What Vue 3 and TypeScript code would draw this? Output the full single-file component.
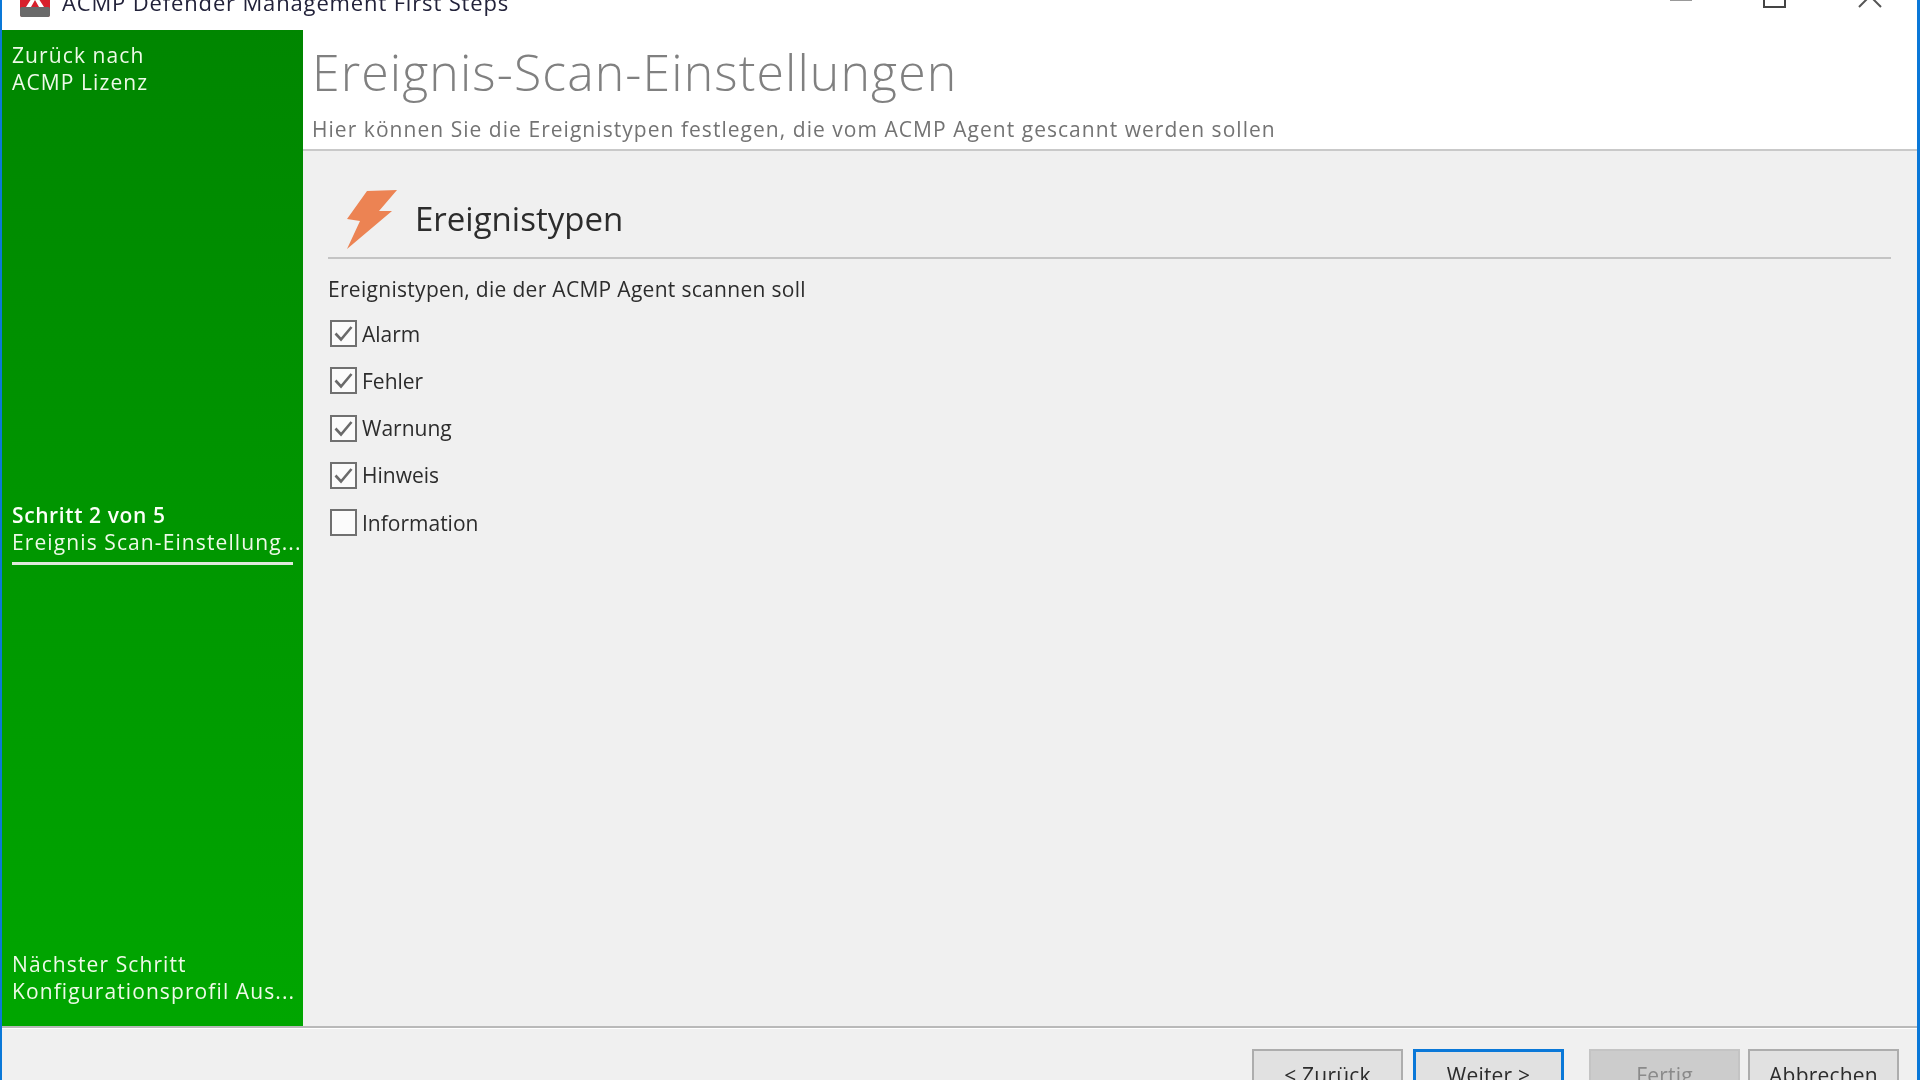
<script setup lang="ts">
interface EventType { label: string; checked: boolean }
const eventTypes: EventType[] = [
  { label: 'Alarm', checked: true },
  { label: 'Fehler', checked: true },
  { label: 'Warnung', checked: true },
  { label: 'Hinweis', checked: true },
  { label: 'Information', checked: false },
]
</script>

<template>
  <div class="window">
    <header class="titlebar">
      <div class="app-title">
        <svg class="app-icon" width="30" height="30" viewBox="0 0 30 30">
          <rect x="0" y="0" width="30" height="30" rx="3" fill="#d8202c" />
          <rect x="0" y="20" width="30" height="10" rx="2" fill="#6a6a6a" />
          <path d="M6 20 L15 6 L24 20 L19 20 L15 13 L11 20 Z" fill="#ffffff" />
        </svg>
        <span class="app-name">ACMP Defender Management First Steps</span>
      </div>
      <div class="controls">
        <span class="ctl-min"></span>
        <span class="ctl-max"></span>
        <svg class="ctl-close" width="24" height="24" viewBox="0 0 24 24">
          <path d="M1 1 L23 23 M23 1 L1 23" stroke="#555" stroke-width="2" fill="none" />
        </svg>
      </div>
    </header>

    <div class="body">
      <aside class="sidebar">
        <div class="side-block">
          <div>Zurück nach</div>
          <div>ACMP Lizenz</div>
        </div>
        <div class="side-block current">
          <div class="step-no">Schritt 2 von 5</div>
          <div class="step-name">Ereignis Scan-Einstellung...</div>
        </div>
        <div class="side-block next">
          <div>Nächster Schritt</div>
          <div>Konfigurationsprofil Aus...</div>
        </div>
      </aside>

      <main class="main">
        <div class="page-head">
          <h1>Ereignis-Scan-Einstellungen</h1>
          <p>Hier können Sie die Ereignistypen festlegen, die vom ACMP Agent gescannt werden sollen</p>
        </div>
        <section class="content">
          <div class="section-head">
            <svg class="bolt" width="52" height="60" viewBox="0 0 52 60">
              <path d="M21 1 L51 0 L33 21 L46 21 L1 59 L14 31 L1 29 Z" fill="#ec8353" />
            </svg>
            <h2>Ereignistypen</h2>
          </div>
          <div class="intro">Ereignistypen, die der ACMP Agent scannen soll</div>
          <ul class="checks">
            <li v-for="t in eventTypes" :key="t.label" class="check-row">
              <span class="box">
                <svg v-if="t.checked" width="23" height="23" viewBox="0 0 23 23">
                  <path d="M3.5 11.5 L9 17.5 L19.5 5" stroke="#6a6a6a" stroke-width="2.6" fill="none" />
                </svg>
              </span>
              <span class="check-label">{{ t.label }}</span>
            </li>
          </ul>
        </section>
      </main>
    </div>

    <footer class="footer">
      <button class="btn" type="button">&lt; Zurück</button>
      <button class="btn primary" type="button">Weiter &gt;</button>
      <button class="btn disabled finish" type="button">Fertig</button>
      <button class="btn last" type="button">Abbrechen</button>
    </footer>
  </div>
</template>

<style>
html, body { margin: 0; background: #fff; overflow: hidden; }
</style>

<style scoped>
.window {
  box-sizing: border-box;
  width: 1920px;
  height: 1080px;
  overflow: hidden;
  display: flex;
  flex-direction: column;
  background: #fff;
  border-left: 2px solid #0a78d8;
  border-right: 3px solid #0a78d8;
  font-family: "Open Sans", "Noto Sans", sans-serif;
  filter: blur(0.7px);
}
.titlebar {
  flex: 0 0 30px;
  display: flex;
  align-items: flex-end;
  justify-content: space-between;
  overflow: hidden;
  background: #fff;
}
.app-title {
  display: flex;
  align-items: flex-end;
  margin-left: 18px;
  padding-bottom: 14px;
}
.app-icon { flex: none; margin-bottom: -1px; }
.app-name {
  margin-left: 12px;
  font-size: 22px;
  letter-spacing: 0.85px;
  line-height: 28px;
  color: #22223a;
  white-space: nowrap;
}
.controls {
  display: flex;
  align-items: flex-end;
  padding-bottom: 22px;
  padding-right: 35px;
}
.ctl-min {
  width: 22px;
  height: 2px;
  background: #999;
  margin-bottom: 7px;
  margin-right: 71px;
}
.ctl-max {
  box-sizing: border-box;
  width: 23px;
  height: 23px;
  border: 2px solid #444;
  margin-right: 72px;
}
.ctl-close { flex: none; }

.body { flex: 0 0 996px; display: flex; min-height: 0; }
.sidebar {
  box-sizing: border-box;
  flex: 0 0 301px;
  min-width: 0;
  display: flex;
  flex-direction: column;
  padding: 12px 10px 21px 10px;
  background: linear-gradient(180deg, #008600 0%, #00a600 100%);
  color: #eefae8;
  font-size: 21px;
  letter-spacing: 1.1px;
  line-height: 27px;
  white-space: nowrap;
}
.current { margin-top: 406px; border-bottom: 3px solid #dfe8dc; padding-bottom: 6px; }
.step-no { font-weight: 600; letter-spacing: 0.6px; color: #fbfff8; }
.step-name { color: #eefae8; }
.next { margin-top: auto; }

.main {
  flex: 1;
  min-width: 0;
  display: flex;
  flex-direction: column;
  background: #f0f0f0;
}
.page-head {
  flex: 0 0 121px;
  box-sizing: border-box;
  background: #fff;
  border-bottom: 2px solid #c9c9c9;
  padding: 9px 0 0 9px;
}
h1 {
  margin: 0;
  font-weight: 300;
  font-size: 50px;
  letter-spacing: 1.1px;
  line-height: 66px;
  color: #808080;
  white-space: nowrap;
}
.page-head p {
  margin: 10px 0 0;
  font-size: 21px;
  letter-spacing: 1.04px;
  line-height: 28px;
  color: #737373;
  white-space: nowrap;
}
.content { padding: 37px 26px 0 25px; }
.section-head {
  display: flex;
  align-items: center;
  height: 70px;
  border-bottom: 2px solid #c4c4c4;
  padding-left: 18px;
  margin-top: -1px;
}
.bolt { flex: none; margin-top: -5px; }
h2 {
  margin: -6px 0 0 17px;
  font-weight: 400;
  font-size: 33px;
  line-height: 42px;
  color: #2c2c2c;
}
.intro {
  margin-top: 16px;
  font-size: 21px;
  letter-spacing: 0.3px;
  line-height: 28px;
  color: #2c2c2c;
}
.checks {
  list-style: none;
  margin: 17px 0 0;
  padding: 0;
  display: flex;
  flex-direction: column;
  gap: 20.3px;
}
.check-row { display: flex; align-items: center; height: 27px; margin-left: 2px; }
.box {
  box-sizing: border-box;
  flex: none;
  width: 27px;
  height: 27px;
  border: 2px solid #707070;
  background: #fbfbfb;
  display: flex;
  align-items: center;
  justify-content: center;
}
.check-label { margin-left: 5px; font-size: 21px; line-height: 28px; color: #2c2c2c; }

.footer {
  flex: 1;
  min-height: 0;
  display: flex;
  justify-content: flex-end;
  align-items: flex-start;
  gap: 10px;
  padding: 21px 18px 0 0;
  background: #f0f0f0;
  border-top: 2px solid #b9b9b9;
  box-shadow: inset 0 1px 0 #fff;
  overflow: hidden;
}
.btn {
  box-sizing: border-box;
  flex: none;
  width: 151px;
  height: 46px;
  background: #e1e1e1;
  border: 2px solid #adadad;
  font-family: inherit;
  font-size: 21px;
  letter-spacing: 0.2px;
  line-height: 28px;
  padding: 6px 0 0;
  color: #2c2c2c;
}
.primary { border: 3px solid #0a78d8; }
.disabled { background: #cccccc; border-color: #c4c4c4; color: #8a8a8a; }
.finish { margin-left: 15px; }
.last { margin-left: -2px; }
</style>
